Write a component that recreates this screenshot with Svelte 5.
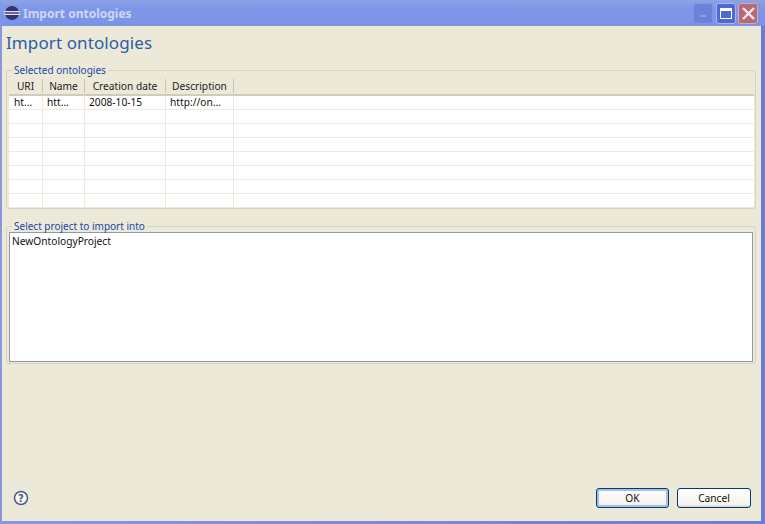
<script>
	const columns = [
		{ label: 'URI', width: 34 },
		{ label: 'Name', width: 42 },
		{ label: 'Creation date', width: 81 },
		{ label: 'Description', width: 68 }
	];
	const rows = [
		['ht...', 'htt...', '2008-10-15', 'http://on...'],
		['', '', '', ''],
		['', '', '', ''],
		['', '', '', ''],
		['', '', '', ''],
		['', '', '', ''],
		['', '', '', ''],
		['', '', '', '']
	];
</script>

<div class="window">
	<header class="titlebar">
		<svg class="app-icon" width="16" height="16" viewBox="0 0 16 16">
			<circle cx="8" cy="8" r="7" fill="#35336f" />
			<rect x="0" y="6" width="16" height="1.3" fill="#dfe0f2" />
			<rect x="0" y="8.7" width="16" height="1.3" fill="#dfe0f2" />
		</svg>
		<span class="title">Import ontologies</span>
		<div class="controls">
			<div class="ctl min"><span class="min-bar"></span></div>
			<div class="ctl max"><span class="max-box"></span></div>
			<div class="ctl close">
				<svg width="15" height="15" viewBox="0 0 15 15">
					<path d="M2 2 L13 13 M13 2 L2 13" stroke="#f4e8ea" stroke-width="2.4" />
				</svg>
			</div>
		</div>
	</header>

	<main class="body">
		<h1>Import ontologies</h1>

		<fieldset class="group first">
			<legend>Selected ontologies</legend>
			<div class="table">
				<div class="thead">
					{#each columns as col}
						<div class="th" style="width: {col.width}px">{col.label}</div>
					{/each}
					<div class="th-rest"></div>
				</div>
				{#each rows as row}
					<div class="tr">
						{#each row as cell, i}
							<div class="td" style="width: {columns[i].width}px">{cell}</div>
						{/each}
						<div class="td-rest"></div>
					</div>
				{/each}
			</div>
		</fieldset>

		<fieldset class="group second">
			<legend>Select project to import into</legend>
			<div class="listbox">NewOntologyProject</div>
		</fieldset>

		<footer class="footer">
			<svg class="help" width="16" height="16" viewBox="0 0 16 16">
				<circle cx="8" cy="8" r="6.5" fill="#f6f6f2" stroke="#4a5f85" stroke-width="1.5" />
				<text x="8" y="11.5" text-anchor="middle" class="help-mark">?</text>
			</svg>
			<div class="buttons">
				<button class="default">OK</button>
				<button>Cancel</button>
			</div>
		</footer>
	</main>
</div>

<style>
	:global(body) {
		margin: 0;
		background: #ece9d8;
	}
	.window {
		width: 765px;
		height: 524px;
		box-sizing: border-box;
		display: flex;
		flex-direction: column;
		background: linear-gradient(90deg, #8a97dc, #6a7dd6);
		padding: 0 4px 3px 2px;
		font-family: 'Noto Sans', 'DejaVu Sans', sans-serif;
		font-size: 10.2px;
		color: #111;
	}
	.titlebar {
		height: 26px;
		margin: 0 -4px 0 -2px;
		padding: 0 7px 0 4px;
		display: flex;
		align-items: center;
		background: linear-gradient(180deg, #8ea3e6 0%, #7e97e8 30%, #7b93e4 100%);
	}
	.app-icon {
		margin-right: 3px;
	}
	.title {
		font-weight: bold;
		font-size: 12px;
		color: #cfd7f3;
	}
	.controls {
		margin-left: auto;
		display: flex;
		gap: 2px;
	}
	.ctl {
		width: 20px;
		height: 21px;
		box-sizing: border-box;
		border-radius: 3px;
		border: 1px solid #a9b8ee;
		display: flex;
		align-items: center;
		justify-content: center;
	}
	.min {
		background: #6c82d9;
		border-color: #8095e2;
		margin-right: 1px;
		align-items: flex-end;
		justify-content: flex-start;
		padding: 0 0 6px 6px;
	}
	.min-bar {
		width: 6px;
		height: 2px;
		background: #8b9de3;
	}
	.max {
		background: #4f69d2;
	}
	.max-box {
		width: 12px;
		height: 11px;
		border: 1px solid #fff;
		border-top-width: 3px;
		box-sizing: border-box;
	}
	.close {
		background: #b56a78;
		border-color: #d5a9b4;
	}
	.body {
		flex: 1;
		min-height: 0;
		display: flex;
		flex-direction: column;
		background: #ece9d8;
		padding: 0 5px 0 4px;
	}
	h1 {
		margin: 5px 0 0;
		height: 24px;
		line-height: 24px;
		font-size: 17px;
		font-weight: normal;
		color: #2a5fa8;
		letter-spacing: 0.1px;
	}
	.group {
		margin: 0;
		padding: 0 1px 0 2px;
		border: 1px solid #d6d3c0;
		border-radius: 3px;
		min-width: 0;
		box-sizing: border-box;
	}
	.first {
		margin-top: 9px;
		height: 145px;
	}
	.second {
		margin-top: 11px;
		height: 144px;
	}
	legend {
		margin-left: 3px;
		padding: 0 2px;
		color: #1a47a5;
		font-size: 10px;
		line-height: 13px;
		height: 13px;
	}
	.table {
		background: #fff;
		overflow: hidden;
	}
	.thead {
		display: flex;
		height: 19px;
		background: #ece9d8;
		border-bottom: 2px solid #cfccb8;
		box-sizing: border-box;
	}
	.th {
		box-sizing: border-box;
		text-align: center;
		border-right: 1px solid #c8c5b2;
		height: 14px;
		margin-top: 2px;
		line-height: 14px;
		color: #222;
	}
	.th-rest {
		flex: 1;
	}
	.tr {
		display: flex;
		height: 14px;
		box-sizing: border-box;
		border-bottom: 1px solid #ecebe0;
	}
	.td {
		box-sizing: border-box;
		border-right: 1px solid #ecebe0;
		padding-left: 4px;
		line-height: 13px;
		white-space: nowrap;
		overflow: hidden;
	}
	.td:first-child {
		padding-left: 5px;
	}
	.td-rest {
		flex: 1;
	}
	.listbox {
		height: 130px;
		box-sizing: border-box;
		background: #fff;
		border: 1px solid #8a9bae;
		padding: 2px;
		margin-top: -1px;
		margin-right: 1px;
		line-height: 13px;
	}
	.footer {
		margin-top: auto;
		display: flex;
		align-items: center;
		justify-content: space-between;
		padding: 0 5px 13px 7px;
	}
	.help-mark {
		font-family: 'DejaVu Sans', sans-serif;
		font-size: 10px;
		font-weight: bold;
		fill: #4a5f85;
	}
	.buttons {
		display: flex;
		gap: 8px;
	}
	button {
		width: 74px;
		height: 20px;
		padding: 0;
		font: inherit;
		color: #111;
		border: 1px solid #003c74;
		border-radius: 3px;
		background: linear-gradient(180deg, #fff, #f4f3ec 85%, #d8d4c8);
	}
	.default {
		width: 73px;
		box-shadow: inset 0 0 0 2px #a6c0e6;
	}
</style>
